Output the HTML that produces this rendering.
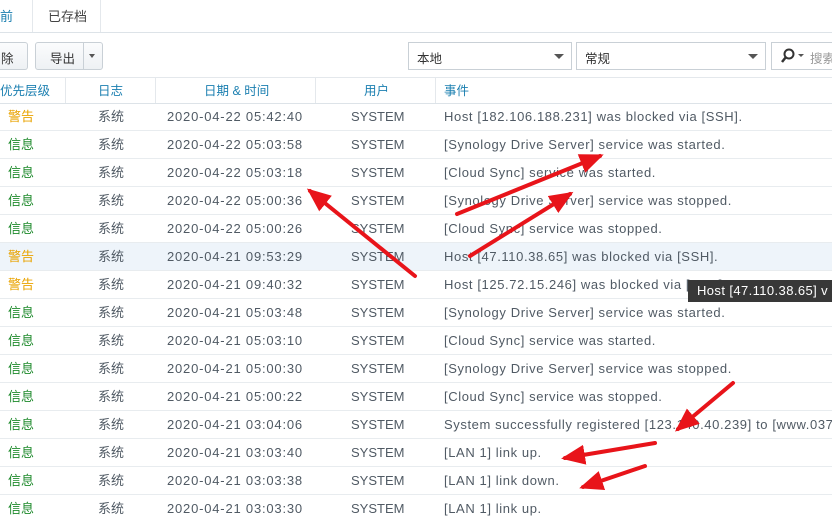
<!DOCTYPE html><html><head><meta charset="utf-8"><style>
html,body{margin:0;width:832px;height:518px;overflow:hidden}
body{background:#fff;font-family:"Liberation Sans","Noto Sans CJK SC",sans-serif;font-size:12.5px;color:#505a64;position:relative}
.a{position:absolute}
.tabs{left:0;top:0;width:832px;height:32px;border-bottom:1px solid #dde3e8}
.btn{border:1px solid #c9d0d6;border-radius:3px;background:linear-gradient(#fbfcfd,#eef1f4);height:26px;top:42px}
.sel{border:1px solid #c9d0d6;background:#fff;height:26px;top:42px}
.tri{width:0;height:0;border-left:5px solid transparent;border-right:5px solid transparent;border-top:5px solid #555}
.hdr{top:77px;left:0;width:832px;height:25px;border-top:1px solid #e4e8ec;border-bottom:1px solid #dde3e8;color:#1b7fb0}
.row{left:0;width:832px;height:27px;border-bottom:1px solid #e8ecef;line-height:28px;font-size:13px;overflow:hidden}
.row span,.hdr span{position:absolute}
.w{color:#e9a300}.i{color:#1e8a2c}
</style></head><body>
<div class="a tabs">
<div class="a" style="left:0;top:6px;color:#1b7fb0;font-size:13px">前</div>
<div class="a" style="left:0;top:0;width:32px;height:32px;border-right:1px solid #e4e8ec"></div>
<div class="a" style="left:48px;top:6px;font-size:13px;color:#444">已存档</div>
<div class="a" style="left:100px;top:0;width:1px;height:32px;background:#e4e8ec"></div>
</div>
<div class="a btn" style="left:0;width:27px;border-left:none;border-radius:0 3px 3px 0"><span class="a" style="left:1px;top:5px;color:#333">除</span></div>
<div class="a btn" style="left:35px;width:66px"><span class="a" style="left:14px;top:5px;color:#333">导出</span><div class="a" style="left:47px;top:0;width:1px;height:26px;background:#c9d0d6"></div><div class="a tri" style="left:53px;top:11px;border-width:4px 3.5px 0"></div></div>
<div class="a sel" style="left:408px;width:162px"><span class="a" style="left:8px;top:5px;color:#333">本地</span><div class="a tri" style="left:145px;top:11px"></div></div>
<div class="a sel" style="left:576px;width:188px"><span class="a" style="left:8px;top:5px;color:#333">常规</span><div class="a tri" style="left:171px;top:11px"></div></div>
<div class="a sel" style="left:771px;width:61px;border-right:none;overflow:hidden"><svg class="a" style="left:8px;top:5px" width="16" height="16"><circle cx="9" cy="6" r="4.5" fill="none" stroke="#333" stroke-width="2"/><line x1="6" y1="9" x2="2" y2="14" stroke="#333" stroke-width="2.5"/></svg><div class="a tri" style="left:26px;top:11px;border-width:3px 3px 0"></div><span class="a" style="left:38px;top:5px;color:#999;white-space:nowrap">搜索</span></div>
<div class="a hdr">
<span style="left:0;top:2px">优先层级</span><span style="left:98px;top:2px">日志</span><span style="left:204px;top:2px">日期 &amp; 时间</span><span style="left:364px;top:2px">用户</span><span style="left:444px;top:2px">事件</span>
<div class="a" style="left:65px;top:0;width:1px;height:25px;background:#e4e8ec"></div>
<div class="a" style="left:155px;top:0;width:1px;height:25px;background:#e4e8ec"></div>
<div class="a" style="left:315px;top:0;width:1px;height:25px;background:#e4e8ec"></div>
<div class="a" style="left:435px;top:0;width:1px;height:25px;background:#e4e8ec"></div>
</div>
<div id="rows"></div>
<script>
var d=[["w","2020-04-22 05:42:40","Host [182.106.188.231] was blocked via [SSH]."],
["i","2020-04-22 05:03:58","[Synology Drive Server] service was started."],
["i","2020-04-22 05:03:18","[Cloud Sync] service was started."],
["i","2020-04-22 05:00:36","[Synology Drive Server] service was stopped."],
["i","2020-04-22 05:00:26","[Cloud Sync] service was stopped."],
["w","2020-04-21 09:53:29","Host [47.110.38.65] was blocked via [SSH]."],
["w","2020-04-21 09:40:32","Host [125.72.15.246] was blocked via [SSH]."],
["i","2020-04-21 05:03:48","[Synology Drive Server] service was started."],
["i","2020-04-21 05:03:10","[Cloud Sync] service was started."],
["i","2020-04-21 05:00:30","[Synology Drive Server] service was stopped."],
["i","2020-04-21 05:00:22","[Cloud Sync] service was stopped."],
["i","2020-04-21 03:04:06","System successfully registered [123.140.40.239] to [www.0372"],
["i","2020-04-21 03:03:40","[LAN 1] link up."],
["i","2020-04-21 03:03:38","[LAN 1] link down."],
["i","2020-04-21 03:03:30","[LAN 1] link up."]];
var h="";d.forEach(function(r,k){h+='<div class="a row" style="top:'+(103+k*28)+'px;'+(k==5?'background:#eef4fa':'')+'"><span class="'+r[0]+'" style="left:8px">'+(r[0]=="w"?"警告":"信息")+'</span><span style="left:98px">系统</span><span style="left:167px;letter-spacing:.8px">'+r[1]+'</span><span style="left:351px">SYSTEM</span><span style="left:444px;white-space:nowrap;letter-spacing:.6px">'+r[2]+'</span></div>'});
document.getElementById("rows").innerHTML=h;
</script>
<div class="a" style="left:688px;top:280px;width:135px;height:22px;background:#383838;color:#fff;font-size:13px;line-height:22px;padding-left:9px;white-space:nowrap;overflow:hidden;letter-spacing:.4px">Host [47.110.38.65] v</div>
<svg class="a" style="left:0;top:0" width="832" height="518">
<defs><marker id="m" markerWidth="6" markerHeight="5" refX="5" refY="2.5" orient="auto"><path d="M0,0L6,2.5L0,5z" fill="#e8141a"/></marker></defs>
<g stroke="#e8141a" stroke-width="4" marker-end="url(#m)" stroke-linecap="round">
<line x1="415" y1="276" x2="310" y2="191"/>
<line x1="457" y1="214" x2="600" y2="156"/>
<line x1="470" y1="256" x2="570" y2="194"/>
<line x1="733" y1="383" x2="678" y2="429"/>
<line x1="655" y1="443" x2="565" y2="458"/>
<line x1="645" y1="466" x2="583" y2="487"/>
</g></svg>
</body></html>
